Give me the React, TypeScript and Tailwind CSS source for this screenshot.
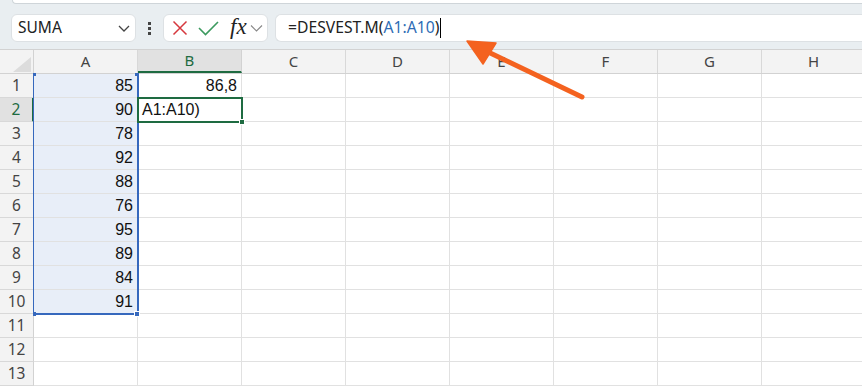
import React from "react";

const cols = ["A", "B", "C", "D", "E", "F", "G", "H"];
const aVals = ["85", "90", "78", "92", "88", "76", "95", "89", "84", "91"];

export default function App() {
  const rows = Array.from({ length: 13 }, (_, i) => i + 1);
  return (
    <div className="relative w-[862px] h-[388px] overflow-hidden bg-white" style={{ fontFamily: '"Liberation Sans", Arial, sans-serif' }}>
      {/* toolbar */}
      <div className="h-[49px] bg-[#e9eef1] flex flex-col">
        <div className="h-[4px] ml-[12px] bg-white rounded-bl-[6px] border-b border-l border-[#cfd5d9]" />
        <div className="flex items-center mt-[10px] pl-[11px]">
          <div className="w-[125px] h-[28px] bg-white rounded-[6px] border border-[#dde1e4] flex items-center justify-between pl-[6px] pr-[4px]">
            <span className="text-[15.5px] text-[#222]" style={{ fontFamily: '"Noto Sans", sans-serif' }}>SUMA</span>
            <svg width="14" height="14" viewBox="0 0 14 14"><path d="M2 5 L7 10 L12 5" fill="none" stroke="#444" strokeWidth="1.3" /></svg>
          </div>
          <div className="w-[27px] flex flex-col items-center gap-[2px]">
            <div className="w-[3px] h-[3px] bg-[#444]" />
            <div className="w-[3px] h-[3px] bg-[#444]" />
            <div className="w-[3px] h-[3px] bg-[#444]" />
          </div>
          <div className="w-[105px] h-[28px] bg-white rounded-[6px] border border-[#dde1e4] flex items-center pl-[8px]">
            <svg width="16" height="16" viewBox="0 0 16 16"><path d="M1.5 1.5 L14.5 14.5 M14.5 1.5 L1.5 14.5" stroke="#d6383e" strokeWidth="1.5" fill="none" /></svg>
            <svg className="ml-[10px]" width="21" height="16" viewBox="0 0 21 16"><path d="M1 8 L7.5 14.5 L20 2" stroke="#3c9a5f" strokeWidth="1.6" fill="none" /></svg>
            <span className="ml-[11px] text-[23px] italic leading-none text-[#222] -mt-[3px]" style={{ fontFamily: '"Liberation Serif", "Times New Roman", serif' }}>fx</span>
            <svg className="ml-[3px]" width="13" height="10" viewBox="0 0 13 10"><path d="M1 2.5 L6.5 8 L12 2.5" stroke="#888" strokeWidth="1.1" fill="none" /></svg>
          </div>
          <div className="ml-[7px] flex-1 h-[28px] bg-white rounded-l-[6px] border border-r-0 border-[#dde1e4] flex items-center pl-[12px]">
            <span className="text-[15.7px] text-[#222] whitespace-pre" style={{ fontFamily: '"Noto Sans", sans-serif' }}>
              =DESVEST.M(<span className="text-[#2e6cb5]">A1:A10</span>)
            </span>
            <div className="w-[1px] h-[20px] bg-black ml-[1px]" />
          </div>
        </div>
      </div>

      {/* column headers */}
      <div className="flex h-[25px] bg-[#f3f3f3] border-t border-b border-[#d2d2d2]" style={{ fontFamily: '"Noto Sans", sans-serif' }}>
        <div className="w-[34px] shrink-0 border-r border-[#d2d2d2] relative">
          <svg className="absolute right-[2px] bottom-[1px]" width="18" height="15" viewBox="0 0 18 15"><path d="M18 0 L18 15 L0 15 Z" fill="#dcdcdc" /></svg>
        </div>
        {cols.map((c) => (
          <div
            key={c}
            className={
              c === "B"
                ? "w-[104px] shrink-0 flex items-center justify-center text-[15px] text-[#1e6b41] bg-[#e1e1e1] border-r border-[#d2d2d2] border-b-2 border-b-[#1e6b41]"
                : "w-[104px] shrink-0 flex items-center justify-center text-[15px] text-[#444] border-r border-[#d8d8d8]"
            }
          >
            {c}
          </div>
        ))}
      </div>

      {/* rows */}
      {rows.map((r) => (
        <div key={r} className="flex h-[24px]">
          <div
            className={
              r === 2
                ? "w-[34px] shrink-0 bg-[#e1e1e1] border-b border-[#d8d8d8] border-r-2 border-r-[#1e6b41] flex items-center justify-center text-[15.5px] text-[#1e6b41]"
                : "w-[34px] shrink-0 bg-[#f3f3f3] border-b border-[#d8d8d8] border-r border-r-[#d2d2d2] flex items-center justify-center text-[15.5px] text-[#444]"
            }
            style={{ fontFamily: '"Noto Sans", sans-serif' }}
          >
            {r}
          </div>
          {cols.map((c) => {
            let content: string = "";
            let align = "justify-end pr-[4px]";
            if (c === "A" && r <= 10) content = aVals[r - 1];
            if (c === "B" && r === 1) content = "86,8";
            if (c === "B" && r === 2) {
              content = "A1:A10)";
              align = "justify-start pl-[4px]";
            }
            const sel = c === "A" && r <= 10;
            return (
              <div
                key={c}
                className={
                  (sel ? "bg-[#e8eef8] " : "bg-white ") +
                  "w-[104px] shrink-0 border-r border-b border-[#e1e1e1] flex items-center text-[16px] text-[#111] " +
                  align
                }
              >
                {content}
              </div>
            );
          })}
        </div>
      ))}

      {/* selection A1:A10 */}
      <div className="absolute left-[33px] top-[73px] w-[106px] h-[242px] border-l border-r-2 border-b-2 border-[#3668bd] pointer-events-none" />
      <div className="absolute left-[33px] top-[73px] w-[3px] h-[3px] bg-[#3668bd]" />
      <div className="absolute left-[135px] top-[73px] w-[3px] h-[3px] bg-[#3668bd]" />
      <div className="absolute left-[33px] top-[312px] w-[3px] h-[4px] bg-[#3668bd]" />
      <div className="absolute left-[134px] top-[311px] w-[6px] h-[6px] bg-[#3668bd] border border-white" />

      {/* active cell B2 */}
      <div className="absolute left-[137px] top-[97px] w-[106px] h-[26px] border-2 border-[#1e6b41] pointer-events-none" />
      <div className="absolute left-[239px] top-[119px] w-[6px] h-[6px] bg-[#1e6b41] border border-white" />

      {/* arrow */}
      <svg className="absolute left-0 top-0 pointer-events-none" width="862" height="388" viewBox="0 0 862 388">
        <line x1="582" y1="97" x2="484" y2="50" stroke="#f4621f" strokeWidth="5" strokeLinecap="round" />
        <path d="M467 41 L496 43 L483 64 Z" fill="#f4621f" stroke="#f4621f" strokeWidth="1.5" strokeLinejoin="round" />
      </svg>
    </div>
  );
}
